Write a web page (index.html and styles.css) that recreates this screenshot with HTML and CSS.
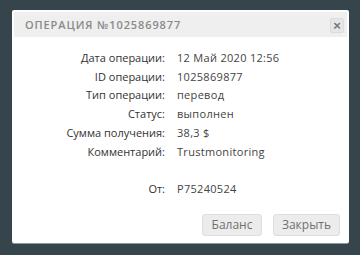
FILE: index.html
```
<!DOCTYPE html>
<html lang="ru">
<head>
    <meta charset="UTF-8">
    <title>Операция №1025869877</title>
    <link rel="stylesheet" href="styles.css">
</head>
<body>
    <div class="modal">
        <div class="modal-header">
            <span class="modal-title">Операция №1025869877</span>
            <button class="close-btn">&times;</button>
        </div>
        <div class="details">
            <div class="label">Дата операции:</div>
            <div class="value">12 Май 2020 12:56</div>
            <div class="label">ID операции:</div>
            <div class="value">1025869877</div>
            <div class="label">Тип операции:</div>
            <div class="value">перевод</div>
            <div class="label">Статус:</div>
            <div class="value">выполнен</div>
            <div class="label">Сумма получения:</div>
            <div class="value">38,3 $</div>
            <div class="label">Комментарий:</div>
            <div class="value">Trustmonitoring</div>
            <div class="label">&nbsp;</div>
            <div class="value">&nbsp;</div>
            <div class="label">От:</div>
            <div class="value">P75240524</div>
        </div>
        <div class="modal-footer">
            <button class="btn btn-balance">Баланс</button>
            <button class="btn btn-close">Закрыть</button>
        </div>
    </div>
</body>
</html>
```

FILE: styles.css
```
body {
    margin: 0;
    padding: 10px 11px 12px 12px;
    background-color: #36444c;
    font-family: "Open Sans", Arial, sans-serif;
}
.modal {
    width: 337px;
    height: 233px;
    box-sizing: border-box;
    padding: 2px;
    background-color: #fff;
    border-radius: 2px;
    box-shadow: 0 1px 0 #8a969c;
}
.modal-header {
    display: flex;
    align-items: center;
    justify-content: space-between;
    height: 25px;
    padding: 0 3px 0 11px;
    background-color: #efefef;
}
.modal-title {
    color: #8a8a8a;
    font-size: 11px;
    font-weight: 600;
    letter-spacing: 0.9px;
    text-transform: uppercase;
}
.close-btn {
    width: 14px;
    height: 15px;
    margin-top: 2px;
    padding: 0;
    border: 1px solid #dcdcdc;
    border-radius: 2px;
    background-color: #e6e6e6;
    color: #777;
    font-family: Arial, sans-serif;
    font-size: 13px;
    font-weight: bold;
    line-height: 12px;
}
.details {
    display: grid;
    grid-template-columns: 151px 1fr;
    column-gap: 12px;
    padding-top: 12px;
    font-size: 11px;
    line-height: 18.7px;
    color: #333;
}
.label {
    text-align: right;
}
.value {
    color: #444;
    letter-spacing: 0.3px;
}
.modal-footer {
    display: flex;
    justify-content: flex-end;
    gap: 11px;
    margin-top: 15px;
    padding-right: 7px;
}
.btn {
    height: 22px;
    padding: 0;
    border: 1px solid #dedede;
    border-radius: 3px;
    background-color: #ececec;
    color: #707070;
    font-family: "Open Sans", sans-serif;
    font-size: 12px;
}
.btn-balance {
    width: 60px;
}
.btn-close {
    width: 67px;
}
```
